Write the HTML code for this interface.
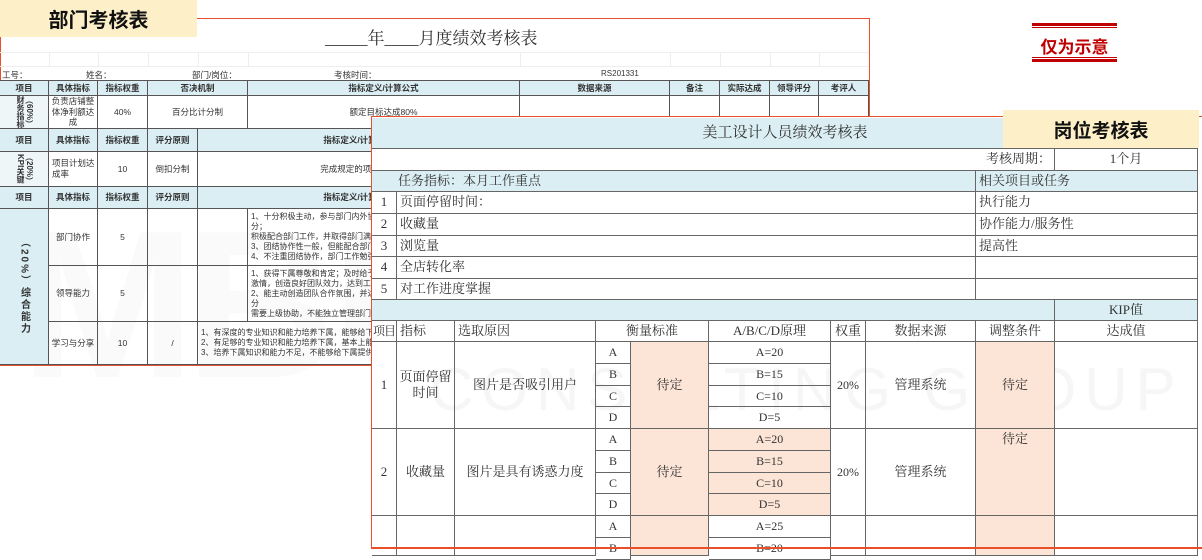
<!DOCTYPE html>
<html><head><meta charset="utf-8">
<style>
*{margin:0;padding:0;box-sizing:border-box}
body{width:1202px;height:549px;position:relative;overflow:hidden;background:#fff;font-family:"Liberation Sans","Noto Sans CJK SC",sans-serif;color:#333}
.a{position:absolute}
.c{position:absolute;border-right:1px solid #555;border-bottom:1px solid #555;display:flex;align-items:center;justify-content:center;text-align:center;line-height:1.25;overflow:hidden}
.L .c{font-size:8.5px}
.hb{background:#daeef3;font-weight:bold}
.R{font-family:"Liberation Serif","Noto Serif CJK SC",serif;font-size:13px;color:#333}
.R .c{border-color:#666}
.bl{background:#daeef3}
.pe{background:#fce4d6}
.lft{justify-content:flex-start;text-align:left;padding-left:3px}
.v{writing-mode:vertical-rl;font-size:8px;font-weight:bold;line-height:1.1;max-height:32px}
</style></head><body>

<!-- watermark -->
<div class="a" style="left:20px;top:200px;font-size:210px;font-weight:bold;color:#fafafa;letter-spacing:-10px;line-height:1;white-space:nowrap">MB中大咨询</div>

<!-- LEFT SHEET -->
<div class="L">
<div class="a" style="left:0;top:18px;width:870px;height:348px;border:1.5px solid #e8502a"></div>
<div class="a" style="left:0;top:0;width:197px;height:37px;background:#fdf0c8;font-size:20px;font-weight:bold;color:#111;display:flex;align-items:center;justify-content:center">部门考核表</div>
<div class="a" style="left:325px;top:24px;font-size:17px;color:#333;font-family:'Liberation Serif','Noto Serif CJK SC',serif">_____年____月度绩效考核表</div>
<div class="a" style="left:0;top:52px;width:869px;height:15px;border-top:1px solid #eee;border-bottom:1px solid #eee"></div>
<div class="a" style="left:49px;top:52px;width:1px;height:15px;background:#eee"></div>
<div class="a" style="left:98px;top:52px;width:1px;height:15px;background:#eee"></div>
<div class="a" style="left:148px;top:52px;width:1px;height:15px;background:#eee"></div>
<div class="a" style="left:198px;top:52px;width:1px;height:15px;background:#eee"></div>
<div class="a" style="left:248px;top:52px;width:1px;height:15px;background:#eee"></div>
<div class="a" style="left:520px;top:52px;width:1px;height:15px;background:#eee"></div>
<div class="a" style="left:670px;top:52px;width:1px;height:15px;background:#eee"></div>
<div class="a" style="left:720px;top:52px;width:1px;height:15px;background:#eee"></div>
<div class="a" style="left:770px;top:52px;width:1px;height:15px;background:#eee"></div>
<div class="a" style="left:819px;top:52px;width:1px;height:15px;background:#eee"></div>
<div class="a" style="left:2px;top:69px;font-size:8.5px">工号：</div>
<div class="a" style="left:86px;top:69px;font-size:8.5px">姓名：</div>
<div class="a" style="left:192px;top:69px;font-size:8.5px">部门/岗位：</div>
<div class="a" style="left:334px;top:69px;font-size:8.5px">考核时间：</div>
<div class="a" style="left:601px;top:69px;font-size:8px">RS201331</div>
<div class="a" style="left:0;top:80px;width:869px;height:1px;background:#555"></div>

<div class="c hb" style="left:0;top:81px;width:49px;height:15px">项目</div>
<div class="c hb" style="left:49px;top:81px;width:49px;height:15px">具体指标</div>
<div class="c hb" style="left:98px;top:81px;width:50px;height:15px">指标权重</div>
<div class="c hb" style="left:148px;top:81px;width:100px;height:15px">否决机制</div>
<div class="c hb" style="left:248px;top:81px;width:272px;height:15px">指标定义/计算公式</div>
<div class="c hb" style="left:520px;top:81px;width:150px;height:15px">数据来源</div>
<div class="c hb" style="left:670px;top:81px;width:50px;height:15px">备注</div>
<div class="c hb" style="left:720px;top:81px;width:50px;height:15px">实际达成</div>
<div class="c hb" style="left:770px;top:81px;width:49px;height:15px">领导评分</div>
<div class="c hb" style="left:819px;top:81px;width:50px;height:15px">考评人</div>

<div class="c" style="left:0;top:96px;width:49px;height:33px;background:#eef6f8"><span class="v">（60%）财务指标</span></div>
<div class="c" style="left:49px;top:96px;width:49px;height:33px">负责店铺整体净利额达成</div>
<div class="c" style="left:98px;top:96px;width:50px;height:33px">40%</div>
<div class="c" style="left:148px;top:96px;width:100px;height:33px">百分比计分制</div>
<div class="c" style="left:248px;top:96px;width:272px;height:33px">额定目标达成80%</div>
<div class="c" style="left:520px;top:96px;width:150px;height:33px"></div>
<div class="c" style="left:670px;top:96px;width:50px;height:33px"></div>
<div class="c" style="left:720px;top:96px;width:50px;height:33px"></div>
<div class="c" style="left:770px;top:96px;width:49px;height:33px"></div>
<div class="c" style="left:819px;top:96px;width:50px;height:33px"></div>

<div class="c hb" style="left:0;top:129px;width:49px;height:23px">项目</div>
<div class="c hb" style="left:49px;top:129px;width:49px;height:23px">具体指标</div>
<div class="c hb" style="left:98px;top:129px;width:50px;height:23px">指标权重</div>
<div class="c hb" style="left:148px;top:129px;width:50px;height:23px">评分原则</div>
<div class="c hb" style="left:198px;top:129px;width:322px;height:23px">指标定义/计算公式</div>

<div class="c" style="left:0;top:152px;width:49px;height:35px;background:#eef6f8"><span class="v">（20%）KPI关键</span></div>
<div class="c lft" style="left:49px;top:152px;width:49px;height:35px">项目计划达成率</div>
<div class="c" style="left:98px;top:152px;width:50px;height:35px">10</div>
<div class="c" style="left:148px;top:152px;width:50px;height:35px">倒扣分制</div>
<div class="c" style="left:198px;top:152px;width:322px;height:35px">完成规定的项目目标</div>

<div class="c hb" style="left:0;top:187px;width:49px;height:22px">项目</div>
<div class="c hb" style="left:49px;top:187px;width:49px;height:22px">具体指标</div>
<div class="c hb" style="left:98px;top:187px;width:50px;height:22px">指标权重</div>
<div class="c hb" style="left:148px;top:187px;width:50px;height:22px">评分原则</div>
<div class="c hb" style="left:198px;top:187px;width:322px;height:22px">指标定义/计算公式</div>

<div class="c" style="left:0;top:209px;width:49px;height:156px;background:#daeef3"><span class="v" style="font-size:10px;max-height:none;letter-spacing:2px">（20%）综合能力</span></div>
<div class="c" style="left:49px;top:209px;width:49px;height:57px">部门协作</div>
<div class="c" style="left:98px;top:209px;width:50px;height:57px">5</div>
<div class="c" style="left:148px;top:209px;width:50px;height:57px"></div>
<div class="c" style="left:198px;top:209px;width:50px;height:57px"></div>
<div class="c lft" style="left:248px;top:209px;width:272px;height:57px;font-size:8px">1、十分积极主动，参与部门内外协作<br>分；<br>积极配合部门工作，并取得部门满意<br>3、团结协作性一般，但能配合部门<br>4、不注重团结协作，部门工作勉强</div>
<div class="c" style="left:49px;top:266px;width:49px;height:56px">领导能力</div>
<div class="c" style="left:98px;top:266px;width:50px;height:56px">5</div>
<div class="c" style="left:148px;top:266px;width:50px;height:56px"></div>
<div class="c" style="left:198px;top:266px;width:50px;height:56px"></div>
<div class="c lft" style="left:248px;top:266px;width:272px;height:56px;font-size:8px">1、获得下属尊敬和肯定；及时给予<br>激情，创造良好团队效力，达到工作<br>2、能主动创造团队合作氛围，并达<br>分<br>需要上级协助，不能独立管理部门</div>
<div class="c" style="left:49px;top:322px;width:49px;height:43px">学习与分享</div>
<div class="c" style="left:98px;top:322px;width:50px;height:43px">10</div>
<div class="c" style="left:148px;top:322px;width:50px;height:43px">/</div>
<div class="c lft" style="left:198px;top:322px;width:322px;height:43px;font-size:8px">1、有深度的专业知识和能力培养下属，能够给下属<br>2、有足够的专业知识和能力培养下属，基本上能<br>3、培养下属知识和能力不足，不能够给下属提供</div>
</div>

<!-- 仅为示意 -->
<div class="a" style="left:1032px;top:23px;width:85px;height:3px;background:#c00000"></div>
<div class="a" style="left:1032px;top:27px;width:85px;height:1px;background:#c00000"></div>
<div class="a" style="left:1032px;top:33px;width:85px;font-size:17px;font-weight:bold;color:#c00000;text-align:center">仅为示意</div>
<div class="a" style="left:1032px;top:57px;width:85px;height:1px;background:#c00000"></div>
<div class="a" style="left:1032px;top:59px;width:85px;height:3px;background:#c00000"></div>

<!-- RIGHT SHEET -->
<div class="R">
<div class="a" style="left:371px;top:116px;width:831px;height:433px;background:#fff;border-left:1.5px solid #e8502a;border-top:1.5px solid #e8502a"></div>
<div class="a" style="left:430px;top:355px;font-size:60px;color:#f6f6f6;letter-spacing:8px;font-family:'Liberation Sans',sans-serif;white-space:nowrap">CONSULTING GROUP</div>
<div class="c bl" style="left:372px;top:118px;width:826px;height:31px;font-size:15px;border-right:none">美工设计人员绩效考核表</div>
<div class="a" style="left:1003px;top:110px;width:196px;height:38px;background:#fdf0c8;font-family:'Liberation Sans','Noto Sans CJK SC',sans-serif;font-size:19px;font-weight:bold;color:#111;display:flex;align-items:center;justify-content:center">岗位考核表</div>
<div class="c" style="left:372px;top:149px;width:683px;height:22px;justify-content:flex-end;padding-right:3px">考核周期：</div>
<div class="c" style="left:1055px;top:149px;width:143px;height:22px">1个月</div>
<div class="c bl lft" style="left:372px;top:171px;width:604px;height:21px;padding-left:26px">任务指标：本月工作重点</div>
<div class="c bl lft" style="left:976px;top:171px;width:222px;height:21px">相关项目或任务</div>

<div class="c" style="left:372px;top:192px;width:25px;height:22px">1</div>
<div class="c lft" style="left:397px;top:192px;width:579px;height:22px">页面停留时间：</div>
<div class="c lft" style="left:976px;top:192px;width:222px;height:22px">执行能力</div>
<div class="c" style="left:372px;top:214px;width:25px;height:22px">2</div>
<div class="c lft" style="left:397px;top:214px;width:579px;height:22px">收藏量</div>
<div class="c lft" style="left:976px;top:214px;width:222px;height:22px">协作能力/服务性</div>
<div class="c" style="left:372px;top:236px;width:25px;height:21px">3</div>
<div class="c lft" style="left:397px;top:236px;width:579px;height:21px">浏览量</div>
<div class="c lft" style="left:976px;top:236px;width:222px;height:21px">提高性</div>
<div class="c" style="left:372px;top:257px;width:25px;height:22px">4</div>
<div class="c lft" style="left:397px;top:257px;width:579px;height:22px">全店转化率</div>
<div class="c lft" style="left:976px;top:257px;width:222px;height:22px"></div>
<div class="c" style="left:372px;top:279px;width:25px;height:21px">5</div>
<div class="c lft" style="left:397px;top:279px;width:579px;height:21px">对工作进度掌握</div>
<div class="c lft" style="left:976px;top:279px;width:222px;height:21px"></div>
<div class="c bl" style="left:372px;top:300px;width:683px;height:21px"></div>
<div class="c bl" style="left:1055px;top:300px;width:143px;height:21px">KIP值</div>

<div class="c" style="left:372px;top:321px;width:25px;height:21px;white-space:nowrap;font-size:12px;letter-spacing:-1px">项目</div>
<div class="c lft" style="left:397px;top:321px;width:58px;height:21px">指标</div>
<div class="c lft" style="left:455px;top:321px;width:141px;height:21px">选取原因</div>
<div class="c" style="left:596px;top:321px;width:113px;height:21px">衡量标准</div>
<div class="c" style="left:709px;top:321px;width:122px;height:21px">A/B/C/D原理</div>
<div class="c" style="left:831px;top:321px;width:35px;height:21px">权重</div>
<div class="c" style="left:866px;top:321px;width:110px;height:21px">数据来源</div>
<div class="c" style="left:976px;top:321px;width:79px;height:21px">调整条件</div>
<div class="c" style="left:1055px;top:321px;width:143px;height:21px">达成值</div>

<!-- group 1 -->
<div class="c" style="left:372px;top:342px;width:25px;height:87px">1</div>
<div class="c" style="left:397px;top:342px;width:58px;height:87px">页面停留<br>时间</div>
<div class="c" style="left:455px;top:342px;width:141px;height:87px">图片是否吸引用户</div>
<div class="c" style="left:596px;top:342px;width:35px;height:22px;font-size:12px">A</div>
<div class="c" style="left:596px;top:364px;width:35px;height:22px;font-size:12px">B</div>
<div class="c" style="left:596px;top:386px;width:35px;height:21px;font-size:12px">C</div>
<div class="c" style="left:596px;top:407px;width:35px;height:22px;font-size:12px">D</div>
<div class="c pe" style="left:631px;top:342px;width:78px;height:87px">待定</div>
<div class="c" style="left:709px;top:342px;width:122px;height:22px;font-size:12px">A=20</div>
<div class="c" style="left:709px;top:364px;width:122px;height:22px;font-size:12px">B=15</div>
<div class="c" style="left:709px;top:386px;width:122px;height:21px;font-size:12px">C=10</div>
<div class="c" style="left:709px;top:407px;width:122px;height:22px;font-size:12px">D=5</div>
<div class="c" style="left:831px;top:342px;width:35px;height:87px;font-size:12px">20%</div>
<div class="c" style="left:866px;top:342px;width:110px;height:87px">管理系统</div>
<div class="c pe" style="left:976px;top:342px;width:79px;height:87px">待定</div>
<div class="c" style="left:1055px;top:342px;width:143px;height:87px"></div>

<!-- group 2 -->
<div class="c" style="left:372px;top:429px;width:25px;height:87px">2</div>
<div class="c" style="left:397px;top:429px;width:58px;height:87px">收藏量</div>
<div class="c" style="left:455px;top:429px;width:141px;height:87px">图片是具有诱惑力度</div>
<div class="c" style="left:596px;top:429px;width:35px;height:22px;font-size:12px">A</div>
<div class="c" style="left:596px;top:451px;width:35px;height:22px;font-size:12px">B</div>
<div class="c" style="left:596px;top:473px;width:35px;height:21px;font-size:12px">C</div>
<div class="c" style="left:596px;top:494px;width:35px;height:22px;font-size:12px">D</div>
<div class="c pe" style="left:631px;top:429px;width:78px;height:87px">待定</div>
<div class="c pe" style="left:709px;top:429px;width:122px;height:22px;font-size:12px">A=20</div>
<div class="c pe" style="left:709px;top:451px;width:122px;height:22px;font-size:12px">B=15</div>
<div class="c pe" style="left:709px;top:473px;width:122px;height:21px;font-size:12px">C=10</div>
<div class="c pe" style="left:709px;top:494px;width:122px;height:22px;font-size:12px">D=5</div>
<div class="c" style="left:831px;top:429px;width:35px;height:87px;font-size:12px">20%</div>
<div class="c" style="left:866px;top:429px;width:110px;height:87px">管理系统</div>
<div class="c pe" style="left:976px;top:429px;width:79px;height:87px;align-items:flex-start;padding-top:2px">待定</div>
<div class="c" style="left:1055px;top:429px;width:143px;height:87px"></div>

<!-- group 3 -->
<div class="c" style="left:372px;top:516px;width:25px;height:40px"></div>
<div class="c" style="left:397px;top:516px;width:58px;height:40px"></div>
<div class="c" style="left:455px;top:516px;width:141px;height:40px"></div>
<div class="c" style="left:596px;top:516px;width:35px;height:22px;font-size:12px">A</div>
<div class="c" style="left:596px;top:538px;width:35px;height:22px;font-size:12px">B</div>
<div class="c pe" style="left:631px;top:516px;width:78px;height:40px"></div>
<div class="c" style="left:709px;top:516px;width:122px;height:22px;font-size:12px">A=25</div>
<div class="c" style="left:709px;top:538px;width:122px;height:22px;font-size:12px;align-items:flex-start;padding-top:3px">B=20</div>
<div class="c" style="left:831px;top:516px;width:35px;height:40px"></div>
<div class="c" style="left:866px;top:516px;width:110px;height:40px"></div>
<div class="c pe" style="left:976px;top:516px;width:79px;height:40px"></div>
<div class="c" style="left:1055px;top:516px;width:143px;height:40px"></div>
<div class="a" style="left:371px;top:547px;width:831px;height:2px;background:#e8502a"></div>
</div>
</body></html>
